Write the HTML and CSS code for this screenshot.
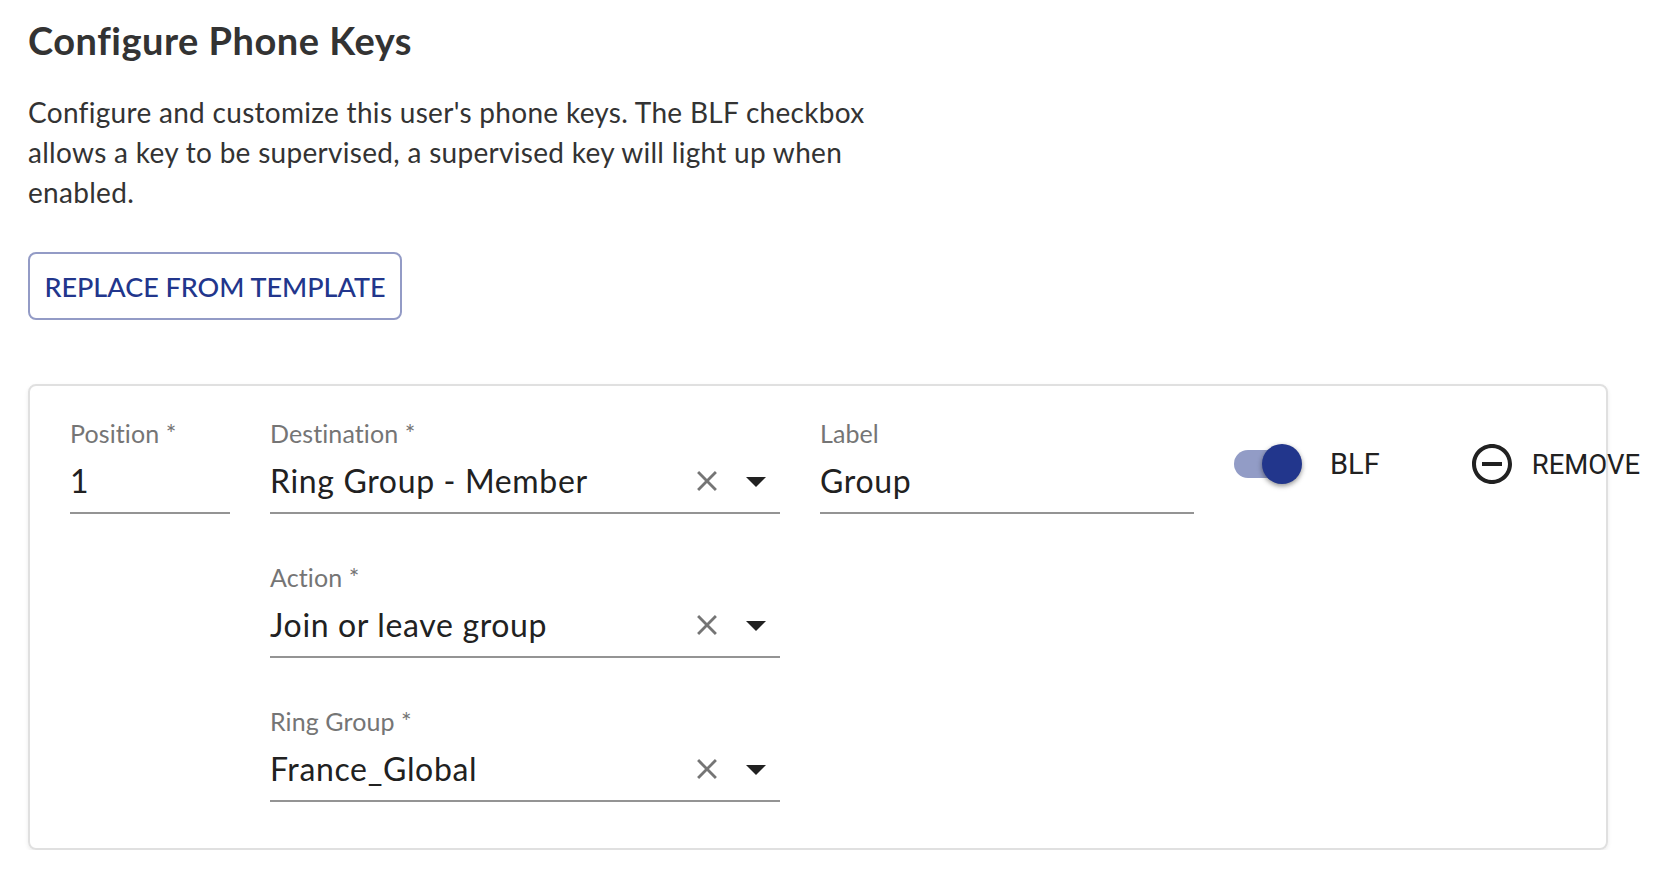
FILE: index.html
```html
<!DOCTYPE html>
<html lang="en">
<head>
    <meta charset="UTF-8">
    <title>Configure Phone Keys</title>
    <link rel="stylesheet" href="styles.css">
</head>
<body>
    <h1>Configure Phone Keys</h1>
    <p class="intro">Configure and customize this user's phone keys. The BLF checkbox allows a key to be supervised, a supervised key will light up when enabled.</p>
    <button class="outline-button">REPLACE FROM TEMPLATE</button>

    <div class="key-card">
        <div class="field field-position">
            <div class="field-label">Position *</div>
            <div class="field-input"><span class="field-value">1</span></div>
        </div>

        <div class="field-stack">
            <div class="field">
                <div class="field-label">Destination *</div>
                <div class="field-input">
                    <span class="field-value">Ring Group - Member</span>
                    <svg class="icon-clear" viewBox="0 0 24 24"><path d="M19 6.41 17.59 5 12 10.59 6.41 5 5 6.41 10.59 12 5 17.59 6.41 19 12 13.41 17.59 19 19 17.59 13.41 12z"/></svg>
                    <svg class="icon-arrow" viewBox="0 0 24 24"><path d="M7 10l5 5 5-5z"/></svg>
                </div>
            </div>
            <div class="field">
                <div class="field-label">Action *</div>
                <div class="field-input">
                    <span class="field-value">Join or leave group</span>
                    <svg class="icon-clear" viewBox="0 0 24 24"><path d="M19 6.41 17.59 5 12 10.59 6.41 5 5 6.41 10.59 12 5 17.59 6.41 19 12 13.41 17.59 19 19 17.59 13.41 12z"/></svg>
                    <svg class="icon-arrow" viewBox="0 0 24 24"><path d="M7 10l5 5 5-5z"/></svg>
                </div>
            </div>
            <div class="field">
                <div class="field-label">Ring Group *</div>
                <div class="field-input">
                    <span class="field-value">France_Global</span>
                    <svg class="icon-clear" viewBox="0 0 24 24"><path d="M19 6.41 17.59 5 12 10.59 6.41 5 5 6.41 10.59 12 5 17.59 6.41 19 12 13.41 17.59 19 19 17.59 13.41 12z"/></svg>
                    <svg class="icon-arrow" viewBox="0 0 24 24"><path d="M7 10l5 5 5-5z"/></svg>
                </div>
            </div>
        </div>

        <div class="field field-name">
            <div class="field-label">Label</div>
            <div class="field-input"><span class="field-value">Group</span></div>
        </div>

        <div class="blf">
            <div class="switch"><div class="switch-thumb"></div></div>
            <span class="blf-text">BLF</span>
        </div>

        <div class="remove">
            <svg class="icon-remove" viewBox="0 0 24 24"><path d="M7 11v2h10v-2H7zm5-9C6.48 2 2 6.48 2 12s4.48 10 10 10 10-4.48 10-10S17.52 2 12 2zm0 18c-4.41 0-8-3.59-8-8s3.59-8 8-8 8 3.59 8 8-3.59 8-8 8z"/></svg>
            <span class="remove-text">REMOVE</span>
        </div>
    </div>
</body>
</html>
```

FILE: styles.css
```css
body {
    font-family: Lato, "Open Sans", sans-serif;
    background-color: white;
    margin: 0;
    padding: 0 0 0 28px;
    overflow: hidden;
    color: #333;
}

h1 {
    font-size: 38px;
    font-weight: 700;
    line-height: 48px;
    margin: 16px 0 0;
    letter-spacing: 0.5px;
}

.intro {
    width: 850px;
    font-size: 28px;
    line-height: 40px;
    margin: 28px 0 0;
    letter-spacing: 0.3px;
}

.outline-button {
    display: block;
    width: 374px;
    height: 68px;
    margin-top: 40px;
    padding: 0;
    background-color: white;
    border: 2px solid #939bc6;
    border-radius: 8px;
    color: #22368c;
    font-family: inherit;
    font-size: 27px;
    font-weight: 500;
}

.key-card {
    display: flex;
    align-items: flex-start;
    gap: 40px;
    box-sizing: border-box;
    width: 1580px;
    height: 466px;
    margin-top: 64px;
    padding: 31px 0 0 40px;
    border: 2px solid #e0e0e0;
    border-radius: 8px;
    box-shadow: 0 2px 4px rgba(0, 0, 0, 0.08);
}

.field {
    width: 510px;
}

.field-position {
    flex: none;
    width: 160px;
}

.field-name {
    flex: none;
    width: 374px;
}

.field-stack {
    flex: none;
    display: flex;
    flex-direction: column;
    gap: 47px;
}

.field-label {
    height: 32px;
    font-size: 25px;
    line-height: 32px;
    color: #757575;
    letter-spacing: 0.1px;
}

.field-input {
    display: flex;
    align-items: center;
    height: 38px;
    margin-top: 13px;
    padding-bottom: 12px;
    border-bottom: 2px solid #949494;
}

.field-value {
    flex: 1;
    font-size: 32px;
    line-height: 38px;
    color: #212121;
    letter-spacing: 0.65px;
}

.icon-clear {
    flex: none;
    width: 34px;
    height: 34px;
    fill: #757575;
    margin-right: 8px;
}

.icon-arrow {
    flex: none;
    width: 48px;
    height: 48px;
    fill: #212121;
}

.blf {
    flex: none;
    display: flex;
    align-items: center;
    height: 94px;
}

.switch {
    position: relative;
    width: 62px;
    height: 28px;
    border-radius: 14px;
    background-color: #929cc6;
}

.switch-thumb {
    position: absolute;
    top: -6px;
    right: -6px;
    width: 40px;
    height: 40px;
    border-radius: 50%;
    background-color: #22368c;
    box-shadow: 0 2px 4px rgba(0, 0, 0, 0.3), 0 2px 6px rgba(0, 0, 0, 0.15);
}

.blf-text {
    margin-left: 34px;
    font-family: Roboto, sans-serif;
    font-size: 29px;
    color: #212121;
}

.remove {
    flex: none;
    display: flex;
    align-items: center;
    height: 94px;
    margin-left: 48px;
}

.icon-remove {
    width: 48px;
    height: 48px;
    fill: #212121;
}

.remove-text {
    margin-left: 16px;
    font-family: Roboto, sans-serif;
    font-size: 27.5px;
    color: #212121;
}
```
